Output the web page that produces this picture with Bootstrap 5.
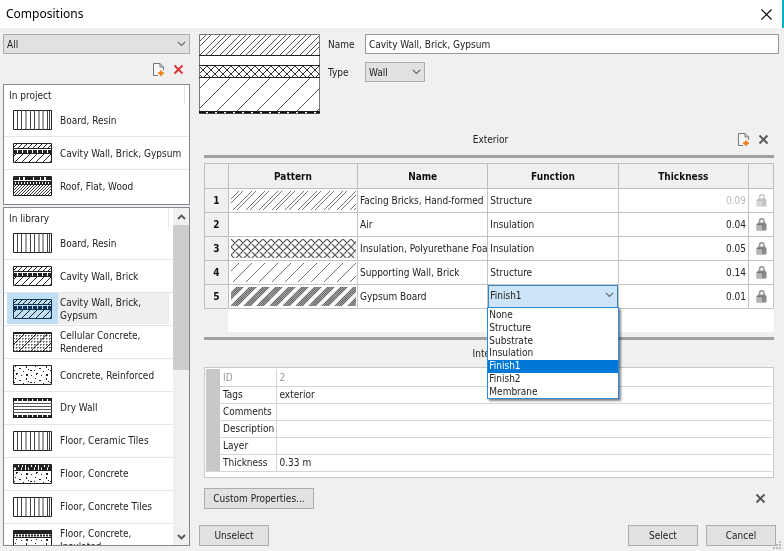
<!DOCTYPE html>
<html lang="en">
<head>
<meta charset="utf-8">
<meta name="viewport" content="width=device-width, initial-scale=1">
<title>Compositions</title>
<link rel="stylesheet" href="https://cdn.jsdelivr.net/npm/bootstrap@5.3.0/dist/css/bootstrap.min.css">
<style>
body{font:10px/13px "DejaVu Sans Condensed","DejaVu Sans",sans-serif;color:#222;background:#f0f0f0}
svg{display:block;flex:none}
.titlebar{height:29px;padding-left:6px;font:12px/28px "Noto Sans","Open Sans",sans-serif;color:#000;border-right:2px solid #00b4bf}
.icon-btn{border:0;background:none;padding:0;color:inherit}
.close-btn{margin-right:10px}
.gray-x{color:#555}
.red-x{color:#d9363a}
.side{width:187px;margin:5px 0 5px 3px}
.ctl{height:20px;border:1px solid #adadad;border-radius:0;background:#e1e1e1;color:#222;padding:0 3px;font-size:10px;line-height:13px;white-space:nowrap}
.field{background:#fff;border-color:#999}
.pick{position:relative}
.pick select{appearance:none;width:100%;display:block}
.pick svg{position:absolute;right:4px;top:7px;pointer-events:none}
.tools{height:30px;padding-right:6px}
.listbox{background:#fff;border:1px solid #828790}
.tools,.project{flex:none}
.project{height:121px}
.library{margin-top:2px}
.list-head{height:19px;padding:4px 0 0 5px;border-right:1px solid #e5e5e5}
.comps{margin:0;padding:0;list-style:none;display:flex;flex-direction:column}
.comps li{flex:1;min-height:0;border-bottom:1px solid #e5e5e5}
.comps li:last-child{border-bottom:0}
.comps button{width:100%;height:100%;text-align:left;display:flex}
.thumb{flex:none;width:51px;margin-left:3px;padding-left:6px;display:flex;align-items:center}
.comp-name{flex:1;display:flex;align-items:center;padding-left:2px;white-space:nowrap}
.three{height:98px}
.ten{height:328px}
.picked .thumb,.picked .comp-name{height:31px}
.picked .thumb{background:#bfdff7}
.picked .comp-name{background:#efefef}
.picked svg{mix-blend-mode:multiply;color:#12395a}
.sbar{width:16px;background:#f0f0f0}
.sthumb{height:145px;background:#cdcdcd}
.sarrow{height:17px}
.workspace{padding-top:1px}
.detail{min-width:0;margin-left:9px;padding:5px 1px 0 0}
.top-area{height:80px}
.form-grid{display:grid;grid-template-columns:29px minmax(0,1fr);column-gap:8px;row-gap:8px;align-content:start}
.type-pick{width:60px}
.inner{padding:0 9px 0 5px}
.rule{height:3px;background:#a0a0a0}
.caption-row{display:grid;grid-template-columns:1fr auto 1fr;align-items:center}
.upper{height:41px;padding:9px 5px 0 8px}
.lower{height:27px}
.layers{width:100%;table-layout:fixed;border-collapse:collapse;background:#fff;margin-top:5px}
.layers th,.layers td{border:1px solid #c4c4c4;height:24px;padding:0 2px;white-space:nowrap;overflow:hidden}
.layers th{background:#f0f0f0;text-align:center;font-weight:bold;border-color:#bdbdbd;color:#111}
.layers thead th{height:25px}
.layers .num{text-align:right}
.layers .off{color:#bbb}
.layers td.open{overflow:visible;padding:0;position:relative}
.layers td.open select{border-color:#3c86c6;background:#cce4f7;height:23px;padding:0 2px 3px 1px}
.layers td svg{margin:auto}
.c-num{width:24px}.c-pat{width:129px}.c-lock{width:25px}
.tail{height:23px;margin-left:24px;background:#fff}
.lower-rule{margin-top:5px}
.options{position:absolute;left:-1px;right:-1px;top:22px;height:92px;z-index:5;background:#fff;border:1px solid #2b87d8;box-shadow:2px 2px 2px #0007;display:grid;grid-auto-rows:1fr}
.options button{line-height:12px;text-align:left;padding-left:1px}
.options .chosen{background:#0078d7;color:#fff}
.propbox{border:1px solid #c8c8c8;background:#fff;padding:1px 1px 5px}
.props{width:100%;border-collapse:collapse;table-layout:fixed}
.props th,.props td{height:17px;padding:0 3px;border-bottom:1px solid #d5d5d5;font-weight:normal;white-space:nowrap}
.props th{border-right:1px solid #d5d5d5;padding-right:0}
.props tr:first-child{color:#999}
.gutter{width:14px;background:#c8c8c8}
.c-key{width:56px}
.custom-row{margin-top:10px}
.cmd{width:70px;height:21px;text-align:center}
.custom{width:110px}
.grip{position:absolute;right:2px;bottom:1px}
footer{padding:0 7px 5px 0}
</style>
<script src="https://cdn.jsdelivr.net/npm/bootstrap@5.3.0/dist/js/bootstrap.bundle.min.js"></script>
</head>
<body>
<svg class="position-absolute" width="0" height="0" aria-hidden="true">
<defs>
<pattern id="p-wide" width="13" height="13" patternUnits="userSpaceOnUse"><path d="M-1 9L9-1M7 14L14 7" stroke="#777"/></pattern>
<pattern id="p-wide2" width="20" height="20" patternUnits="userSpaceOnUse"><path d="M-1 16L16-1M14 21L21 14" stroke="#555"/></pattern>
<pattern id="p-pair" width="13" height="13" patternUnits="userSpaceOnUse"><path d="M-1 9L9-1M7 14L14 7M-1 13L13-1M11 14L14 11" stroke="#777"/></pattern>
<pattern id="p-pair2" width="20" height="20" patternUnits="userSpaceOnUse"><path d="M-1 3L3-1M1 21L21 1M-1 9L9-1M7 21L21 7M-1 14L14-1M12 21L21 12" stroke="#555"/></pattern>
<pattern id="p-dense" width="13" height="13" patternUnits="userSpaceOnUse"><path d="M-1 7L7-1M5 14L14 5M-1 9L9-1M7 14L14 7M-1 11L11-1M9 14L14 9M-1 13L13-1M11 14L14 11" stroke="#666" stroke-width="1.200"/></pattern>
<pattern id="p-cross" width="8" height="8" patternUnits="userSpaceOnUse"><path d="M-1 9L9-1M-1-1L9 9M-1 1L1-1M7 9L9 7M-1 7L1 9M7-1L9 1" stroke="#555" stroke-width="1.200"/></pattern>
<pattern id="p-cross2" width="8" height="8" patternUnits="userSpaceOnUse"><path d="M-1 9L9-1M-1-1L9 9M-1 1L1-1M7 9L9 7M-1 7L1 9M7-1L9 1" stroke="#333"/></pattern>
<pattern id="p-s5" width="5" height="5" patternUnits="userSpaceOnUse"><path d="M-1 6L6-1" stroke="currentColor"/></pattern>
<pattern id="p-s7" width="7" height="7" patternUnits="userSpaceOnUse"><path d="M-1 8L8-1" stroke="currentColor"/></pattern>
<pattern id="p-s3" width="3" height="3" patternUnits="userSpaceOnUse"><path d="M-1 4L4-1" stroke="currentColor" stroke-width=".9"/></pattern>
<pattern id="p-grid" width="3" height="3" patternUnits="userSpaceOnUse"><path d="M0 .5H2M.5 0V2" stroke="currentColor" stroke-width=".5"/></pattern>
<pattern id="p-spk" width="20" height="12" patternUnits="userSpaceOnUse"><path d="M2 1h1v1h-1zM6 3h2v1h-2zM13 1h1v2h-1zM17 5h2v1h-2zM10 6h1v1h-1zM3 8h2v1h-1v1h-1zM8 10h1v1h-1zM13 9h2v2h-2zM18 10h1v1h-1zM15 4h1v1h-1zM1 5h1v1h-1z" fill="currentColor"/></pattern>
<symbol id="t-board" viewBox="0 0 39 20"><path d="M.5.5h38v19H.5z" fill="#fff" stroke="#222"/><path d="M4.500 0v20M8.500 0v20M13 0v20M17.500 0v20M21.500 0v20M26 0v20M30 0v20M34.500 0v20M36.500 0v20" stroke="#444"/></symbol>
<symbol id="t-cavity" viewBox="0 0 39 20"><path fill="#fff" d="M0 0h39v20H0z"/><path fill="url(#p-s5)" d="M0 0h39v5H0z"/><path fill="url(#p-s7)" d="M0 11h39v9H0z"/><path d="M.5.5h38v19H.5zM0 5.500h39M0 10.500h39" fill="none" stroke="currentColor"/><path d="M0 8.500h39" stroke="currentColor" stroke-width="3" stroke-dasharray="4 1"/></symbol>
<symbol id="t-roof" viewBox="0 0 39 20"><path fill="#fff" d="M0 0h39v20H0z"/><path fill="url(#p-s3)" d="M0 9h39v11H0z"/><path d="M.5.5h38v19H.5zM0 5.500h39M0 8.500h39" fill="none" stroke="currentColor"/><path d="M0 2.500h39" stroke="currentColor" stroke-width="3" stroke-dasharray="6 1 3 2 8 1"/><path d="M0 7h39" stroke="currentColor" stroke-width="2" stroke-dasharray="2 1"/></symbol>
<symbol id="t-cell" viewBox="0 0 39 20"><path fill="#fff" d="M0 0h39v20H0z"/><path fill="url(#p-grid)" d="M0 0h39v20H0z"/><path d="M.5.5h38v19H.5zM0 1.500h39M0 13L12 1M5 20L24 1M17 20L35 1M29 20l10-10" fill="none" stroke="currentColor"/></symbol>
<symbol id="t-conc" viewBox="0 0 39 20"><path fill="#fff" d="M0 0h39v20H0z"/><path fill="url(#p-spk)" d="M0 0h39v20H0z"/><path d="M.5.5h38v19H.5z" fill="none" stroke="currentColor"/></symbol>
<symbol id="t-dry" viewBox="0 0 39 20"><path d="M.5.5h38v19H.5z" fill="#fff" stroke="currentColor"/><path d="M0 5.500h39M0 8.500h39M0 11.500h39M0 14.500h39" stroke="#555"/><path d="M0 1.500h39M0 18.500h39" stroke="currentColor" stroke-width="3" stroke-dasharray="4 1"/></symbol>
<symbol id="t-fconc" viewBox="0 0 39 20"><path fill="#fff" d="M0 0h39v20H0z"/><path fill="url(#p-spk)" d="M0 7h39v13H0z"/><path d="M.5.5h38v19H.5zM0 6.500h39" fill="none" stroke="currentColor"/><path d="M0 2h39M3 4.500h36" stroke="currentColor" stroke-width="3" stroke-dasharray="5 1 3 1 2 1"/></symbol>
<symbol id="t-fins" viewBox="0 0 39 20"><path fill="#fff" d="M0 0h39v20H0z"/><path fill="url(#p-spk)" d="M0 9h39v11H0z"/><path d="M.5.5h38v19H.5zM0 7.500h39" fill="none" stroke="currentColor"/><path d="M0 2h39" stroke="currentColor" stroke-width="4"/><path d="M0 5.500h39" stroke="currentColor" stroke-width="2" stroke-dasharray="2 1"/></symbol>
<symbol id="i-new" viewBox="0 0 13 15"><path d="M1.500 1.500h6.500l3.500 3.500v8.500h-10z" fill="#f6f6f6"/><path d="M6 13.500H1.500V1.500H8L11.500 5V8M8 1.500V5h3.500" fill="none" stroke="#777"/><path d="M9 8.500l1.200 1.800L12 11l-1.800 1.200L9 14l-1.200-1.800L6 11l1.800-.7z" fill="#f58220" stroke="#f58220"/></symbol>
<symbol id="i-x" viewBox="0 0 11 11"><path d="M1.500 1.500l8 8M9.500 1.500l-8 8" stroke="currentColor" stroke-width="1.900"/></symbol>
<symbol id="i-chev" viewBox="0 0 9 6"><path d="M.8.800L4.500 4.500 8.200.8" fill="none" stroke="#666" stroke-width="1.200"/></symbol>
<symbol id="i-lock" viewBox="0 0 11 13"><path d="M3.500 5V3.500a2 2.500 0 0 1 4.500 0V6" fill="none" stroke="#999" stroke-width="1.500"/><path d="M.5 6L2.500 4.500h6l2 1.500v6.500H.5z" fill="#8a8a8a"/><path d="M1 6.500h5v5.500H1z" fill="#b4b4b4"/><path d="M1 6.500h6l2-1.500" fill="none" stroke="#777"/></symbol>
</defs>
</svg>
<div class="vh-100 d-flex flex-column overflow-hidden position-relative">
<header class="titlebar bg-white d-flex justify-content-between align-items-center">
<span>Compositions</span>
<button class="icon-btn close-btn" aria-label="Close"><svg width="11" height="11" viewBox="0 0 11 11"><path d="M.5.5l10 10M10.500.5l-10 10" stroke="#000" stroke-width="1.100"/></svg></button>
</header>
<main class="workspace d-flex flex-grow-1 overflow-hidden">
<aside class="side d-flex flex-column flex-shrink-0">
<div class="pick"><select class="ctl" aria-label="Category"><option>All</option></select><svg width="9" height="6"><use href="#i-chev"/></svg></div>
<div class="tools d-flex justify-content-end align-items-center gap-2"><button class="icon-btn" aria-label="New composition"><svg width="13" height="15"><use href="#i-new"/></svg></button><button class="icon-btn red-x" aria-label="Delete composition"><svg width="11" height="11"><use href="#i-x"/></svg></button></div>
<section class="listbox project">
<div class="list-head me-1">In project</div>
<ul class="comps three">
<li><button class="icon-btn"><span class="thumb"><svg width="39" height="20"><use href="#t-board"/></svg></span><span class="comp-name">Board, Resin</span></button></li>
<li><button class="icon-btn"><span class="thumb"><svg width="39" height="20"><use href="#t-cavity"/></svg></span><span class="comp-name">Cavity Wall, Brick, Gypsum</span></button></li>
<li><button class="icon-btn"><span class="thumb"><svg width="39" height="20"><use href="#t-roof"/></svg></span><span class="comp-name">Roof, Flat, Wood</span></button></li>
</ul>
</section>
<section class="listbox library d-flex flex-grow-1 overflow-hidden">
<div class="flex-grow-1">
<div class="list-head me-1">In library</div>
<ul class="comps ten">
<li><button class="icon-btn"><span class="thumb"><svg width="39" height="20"><use href="#t-board"/></svg></span><span class="comp-name">Board, Resin</span></button></li>
<li><button class="icon-btn"><span class="thumb"><svg width="39" height="20"><use href="#t-cavity"/></svg></span><span class="comp-name">Cavity Wall, Brick</span></button></li>
<li class="picked"><button class="icon-btn"><span class="thumb"><svg width="39" height="20"><use href="#t-cavity"/></svg></span><span class="comp-name me-1">Cavity Wall, Brick,<br>Gypsum</span></button></li>
<li><button class="icon-btn"><span class="thumb"><svg width="39" height="20"><use href="#t-cell"/></svg></span><span class="comp-name">Cellular Concrete,<br>Rendered</span></button></li>
<li><button class="icon-btn"><span class="thumb"><svg width="39" height="20"><use href="#t-conc"/></svg></span><span class="comp-name">Concrete, Reinforced</span></button></li>
<li><button class="icon-btn"><span class="thumb"><svg width="39" height="20"><use href="#t-dry"/></svg></span><span class="comp-name">Dry Wall</span></button></li>
<li><button class="icon-btn"><span class="thumb"><svg width="39" height="20"><use href="#t-board"/></svg></span><span class="comp-name">Floor, Ceramic Tiles</span></button></li>
<li><button class="icon-btn"><span class="thumb"><svg width="39" height="20"><use href="#t-fconc"/></svg></span><span class="comp-name">Floor, Concrete</span></button></li>
<li><button class="icon-btn"><span class="thumb"><svg width="39" height="20"><use href="#t-board"/></svg></span><span class="comp-name">Floor, Concrete Tiles</span></button></li>
<li><button class="icon-btn"><span class="thumb"><svg width="39" height="20"><use href="#t-fins"/></svg></span><span class="comp-name">Floor, Concrete,<br>Insulated</span></button></li>
</ul>
</div>
<div class="sbar d-flex flex-column">
<div class="sarrow d-flex align-items-center justify-content-center"><svg width="9" height="6" viewBox="0 0 9 6"><path d="M1 5l3.500-3.500L8 5" fill="none" stroke="#555" stroke-width="1.800"/></svg></div>
<div class="sthumb"></div>
<div class="sarrow mt-auto d-flex align-items-center justify-content-center"><svg width="9" height="6" viewBox="0 0 9 6"><path d="M1 1l3.500 3.500L8 1" fill="none" stroke="#555" stroke-width="1.800"/></svg></div>
</div>
</section>
</aside>
<section class="d-flex flex-column flex-grow-1 detail">
<div class="d-flex gap-2 me-1 top-area">
<svg width="121" height="80" viewBox="0 0 121 80"><path fill="#fff" d="M0 0h121v80H0z"/><path fill="url(#p-pair2)" d="M0 0h121v21H0z"/><path fill="url(#p-cross2)" d="M0 32h121v11H0z"/><path fill="url(#p-wide2)" d="M0 44h121v33H0z"/><path d="M.5.5h120v79H.5z" fill="none" stroke="#777"/><path d="M0 21.500h121M0 31.500h121M0 43.500h121M0 77.500h121" stroke="#222"/><path d="M0 78.500h121" stroke="#111" stroke-width="2" stroke-dasharray="7 2"/></svg>
<div class="form-grid flex-grow-1 align-items-center">
<label for="nm">Name</label><input id="nm" class="ctl field" value="Cavity Wall, Brick, Gypsum">
<label for="ty">Type</label><div class="pick type-pick"><select id="ty" class="ctl"><option>Wall</option></select><svg width="9" height="6"><use href="#i-chev"/></svg></div>
</div>
</div>
<div class="inner d-flex flex-column">
<div class="caption-row upper"><span></span><span>Exterior</span><div class="d-flex justify-content-end align-items-center gap-2"><button class="icon-btn" aria-label="Add layer"><svg width="13" height="15"><use href="#i-new"/></svg></button><button class="icon-btn gray-x" aria-label="Remove layer"><svg width="11" height="11"><use href="#i-x"/></svg></button></div></div>
<div class="rule"></div>
<table class="layers">
<colgroup><col class="c-num"><col class="c-pat"><col><col><col><col class="c-lock"></colgroup>
<thead><tr><th></th><th>Pattern</th><th>Name</th><th>Function</th><th>Thickness</th><th></th></tr></thead>
<tbody>
<tr><th>1</th><td><svg width="125" height="19"><path fill="url(#p-pair)" d="M0 0h125v19H0z"/></svg></td><td>Facing Bricks, Hand-formed</td><td>Structure</td><td class="num off">0.09</td><td><svg class="opacity-50" width="11" height="13"><use href="#i-lock"/></svg></td></tr>
<tr><th>2</th><td></td><td>Air</td><td>Insulation</td><td class="num">0.04</td><td><svg width="11" height="13"><use href="#i-lock"/></svg></td></tr>
<tr><th>3</th><td><svg width="125" height="19"><path fill="url(#p-cross)" d="M0 0h125v19H0z"/></svg></td><td>Insulation, Polyurethane Foam</td><td>Insulation</td><td class="num">0.05</td><td><svg width="11" height="13"><use href="#i-lock"/></svg></td></tr>
<tr><th>4</th><td><svg width="125" height="19"><path fill="url(#p-wide)" d="M0 0h125v19H0z"/></svg></td><td>Supporting Wall, Brick</td><td>Structure</td><td class="num">0.14</td><td><svg width="11" height="13"><use href="#i-lock"/></svg></td></tr>
<tr><th>5</th><td><svg width="125" height="19"><path fill="url(#p-dense)" d="M0 0h125v19H0z"/></svg></td><td>Gypsum Board</td><td class="open"><div class="pick"><select class="ctl" aria-label="Function"><option>Finish1</option></select><svg width="9" height="6"><use href="#i-chev"/></svg></div>
<div class="options" role="listbox"><button class="icon-btn" role="option">None</button><button class="icon-btn" role="option">Structure</button><button class="icon-btn" role="option">Substrate</button><button class="icon-btn" role="option">Insulation</button><button class="icon-btn chosen" role="option" aria-selected="true">Finish1</button><button class="icon-btn" role="option">Finish2</button><button class="icon-btn" role="option">Membrane</button></div></td><td class="num">0.01</td><td><svg width="11" height="13"><use href="#i-lock"/></svg></td></tr>
</tbody>
</table>
<div class="tail"></div>
<div class="rule lower-rule"></div>
<div class="caption-row lower"><span></span><span>Interior</span><span></span></div>
<div class="propbox">
<table class="props">
<colgroup><col class="gutter"><col class="c-key"><col></colgroup>
<tr><td class="gutter" rowspan="6"></td><th>ID</th><td>2</td></tr>
<tr><th>Tags</th><td>exterior</td></tr>
<tr><th>Comments</th><td></td></tr>
<tr><th>Description</th><td></td></tr>
<tr><th>Layer</th><td></td></tr>
<tr><th>Thickness</th><td>0.33 m</td></tr>
</table>
</div>
<div class="d-flex justify-content-between align-items-center custom-row"><button class="ctl cmd custom">Custom Properties...</button><button class="icon-btn gray-x me-2" aria-label="Remove property"><svg width="11" height="11"><use href="#i-x"/></svg></button></div>
</div>
<footer class="d-flex mt-auto"><button class="ctl cmd me-auto">Unselect</button><button class="ctl cmd me-2">Select</button><button class="ctl cmd">Cancel</button></footer>
</section>
</main>
<svg class="grip" width="9" height="9" viewBox="0 0 9 9"><path d="M6 0h2v2H6zM3 3h2v2H3zM6 3h2v2H6zM0 6h2v2H0zM3 6h2v2H3zM6 6h2v2H6z" fill="#bbb"/></svg>
</div>
</body>
</html>
